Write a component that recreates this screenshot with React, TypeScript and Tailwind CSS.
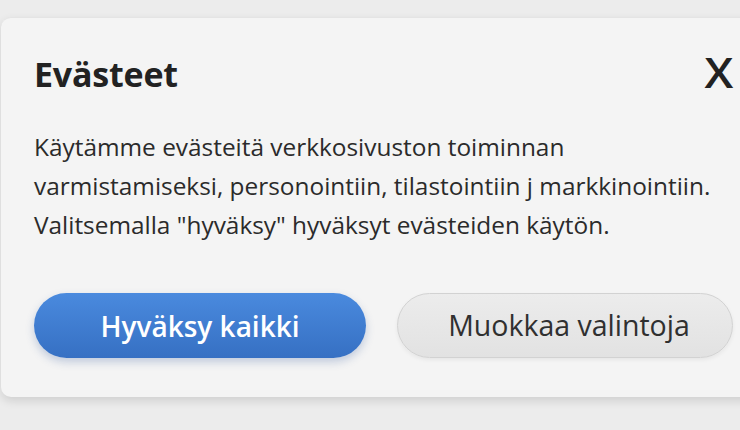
import React from 'react';

export default function App() {
    return (
        <div className="w-[740px] h-[430px] overflow-hidden bg-[#ececec] pt-[17px] pl-px" style={{ fontFamily: '"Open Sans", "Noto Sans", sans-serif' }}>
            {/* Cookie dialog */}
            <div className="w-[770px] h-[380px] bg-[#f4f4f4] rounded-l-[10px] border-t border-[#e4e4e4] shadow-[0_4px_10px_rgba(0,0,0,0.12)] pl-[33px] pr-[38px]">
                <div className="flex items-center justify-between w-[699px] pt-[32px]">
                    <h2 className="text-[34px] font-bold text-[#222] leading-[48px] tracking-[-0.2px]">Evästeet</h2>
                    <button className="text-[42px] font-semibold text-[#222] leading-[48px] -mt-[4px] scale-x-110 origin-right">X</button>
                </div>
                <p className="mt-[29px] text-[24.4px] leading-[39px] text-[#2b2b2b] w-[700px]">
                    Käytämme evästeitä verkkosivuston toiminnan<br />
                    varmistamiseksi, personointiin, tilastointiin j markkinointiin.<br />
                    Valitsemalla "hyväksy" hyväksyt evästeiden käytön.
                </p>
                <div className="flex gap-[31px] mt-[49px]">
                    <button className="w-[332px] h-[65px] rounded-full bg-gradient-to-b from-[#4a8ade] to-[#3670c3] text-white text-[28px] font-semibold shadow-[0_4px_8px_rgba(40,80,150,0.25)]">
                        Hyväksy kaikki
                    </button>
                    <button className="w-[336px] h-[65px] rounded-full bg-gradient-to-b from-[#ececec] to-[#e2e2e2] border border-[#d2d2d2] text-[#303030] text-[28.5px] pl-[8px] shadow-[0_2px_4px_rgba(0,0,0,0.06)]">
                        Muokkaa valintoja
                    </button>
                </div>
            </div>
        </div>
    );
}
